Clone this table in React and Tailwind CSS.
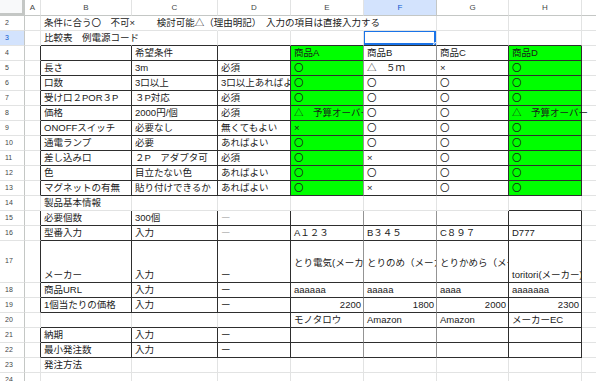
import React from "react";

const COLS = ["w-[25px]", "w-[16px]", "w-[91px]", "w-[86px]", "w-[73px]", "w-[73px]", "w-[73px]", "w-[72px]", "w-[73px]", "w-[100px]"];
const LETTERS = ["", "A", "B", "C", "D", "E", "F", "G", "H", ""];
const O = "〇";
const X = "×";

// columns from B (index 2) onward
const ROWS = {
  2: ["条件に合う〇　不可×　　 検討可能△（理由明記）　入力の項目は直接入力する"],
  3: ["比較表　例電源コード"],
  4: ["", "希望条件", "", "商品A", "商品B", "商品C", "商品D"],
  5: ["長さ", "3m", "必須", O, "△　５ｍ", X, O],
  6: ["口数", "3口以上", "3口以上あればよい", O, O, O, O],
  7: ["受け口２POR３P", "３P対応", "必須", O, O, O, O],
  8: ["価格", "2000円/個", "必須", "△　予算オーバー", O, O, "△　予算オーバー"],
  9: ["ONOFFスイッチ", "必要なし", "無くてもよい", X, O, O, O],
  10: ["通電ランプ", "必要", "あればよい", O, O, O, O],
  11: ["差し込み口", "２P　アダプタ可", "必須", O, X, O, O],
  12: ["色", "目立たない色", "あればよい", O, O, O, O],
  13: ["マグネットの有無", "貼り付けできるか", "あればよい", O, X, O, O],
  14: ["製品基本情報"],
  15: ["必要個数", "300個", "ー"],
  16: ["型番入力", "入力", "ー", "A１２３", "B３４５", "C８９７", "D777"],
  17: ["メーカー", "入力", "ー", "とり電気(メーカー)", "とりのめ（メーカー）", "とりかめら（メーカー）", "toritori(メーカー)"],
  18: ["商品URL", "入力", "ー", "aaaaaa", "aaaaa", "aaaa", "aaaaaaa"],
  19: ["1個当たりの価格", "入力", "ー", "2200", "1800", "2000", "2300"],
  20: ["", "", "", "モノタロウ", "Amazon", "Amazon", "メーカーEC"],
  21: ["納期", "入力", "ー"],
  22: ["最小発注数", "入力", "ー"],
  23: ["発注方法"],
  24: [],
};

const RB = {
  dark: "border-r-[#2e2e2e]",
  gray: "border-r-[#949494]",
  light: "border-r-[#e2e3e3]",
  none: "border-r-transparent",
  head: "border-r-[#c4c7c5]",
};
const BB = {
  dark: "border-b-[#2e2e2e]",
  light: "border-b-[#e2e3e3]",
  head: "border-b-[#c4c7c5]",
};

function rightKind(r, c) {
  if (c === 0) return "head";
  const boxed = (r >= 4 && r <= 13) || (r >= 15 && r <= 22);
  if (boxed) {
    if (c >= 1 && c <= 3) return r === 20 ? "light" : "dark";
    if (c === 4) return "dark";
    if (c === 5 || c === 6) return "gray";
    if (c === 7 || c === 8) return "dark";
  }
  if (r === 2 && c >= 2 && c <= 5) return "none";
  if (r === 3 && c === 2) return "none";
  return "light";
}

function bottomKind(r, c) {
  if (c === 0) return "head";
  if (c >= 2 && c <= 8) {
    if (r >= 3 && r <= 13) return "dark";
    if (r >= 15 && r <= 22) return "dark";
    if (r === 14 && c === 8) return "dark";
  }
  return "light";
}

function Cell({ r, c }) {
  const text = c >= 2 ? ROWS[r][c - 2] || "" : "";
  const green = r >= 4 && r <= 13 && (c === 5 || c === 8);
  const over = (r === 2 && c === 2) || (r === 3 && c === 2) || (r === 8 && c === 8);
  const right = r === 19 && c >= 5;
  const mid = r === 17 && c >= 5 && c <= 7;
  const faint = (r === 15 || r === 16) && c === 4;
  return (
    <div
      className={`relative flex shrink-0 border-r border-b px-[3px] pb-px ${COLS[c]} ${RB[rightKind(r, c)]} ${BB[bottomKind(r, c)]} ${
        green ? "bg-[#00ff00]" : ""
      } ${over ? "overflow-visible" : "overflow-hidden"} ${right ? "justify-end pr-[2px]" : ""} ${mid ? "items-center pt-[3px]" : "items-end"} ${
        faint ? "text-[#b5b5b5]" : "text-[#1a1a1a]"
      }`}
    >
      <span className="whitespace-nowrap leading-[12px]">{text}</span>
      {r === 3 && c === 6 && (
        <>
          <div className="absolute left-[-1px] top-[-1px] right-0 bottom-0 border-2 border-[#1a73e8]" />
          <div className="absolute right-[-3px] bottom-[-3px] w-[6px] h-[6px] rounded-full bg-[#1a73e8] border border-white" />
        </>
      )}
    </div>
  );
}

export default function App() {
  const rowNums = Object.keys(ROWS).map(Number);
  return (
    <div className="w-[596px] h-[381px] overflow-hidden bg-white font-['Liberation_Sans','Noto_Sans_CJK_JP',sans-serif] text-[9.5px]">
      <div className="flex h-[16px]">
        {LETTERS.map((l, c) => (
          <div
            key={c}
            className={`flex shrink-0 items-center justify-center text-[8px] ${COLS[c]} ${
              c === 0
                ? "bg-[#f8f9fa] border-r-[3px] border-b-[3px] border-[#c4c7c5]"
                : c === 6
                ? "bg-[#d3e3fd] text-[#0b57d0] border-r border-b border-r-[#c4c7c5] border-b-[#c4c7c5]"
                : "text-[#444746] border-r border-b border-r-[#e2e3e3] border-b-[#c4c7c5]"
            }`}
          >
            {l}
          </div>
        ))}
      </div>
      {rowNums.map((r) => (
        <div key={r} className={`flex ${r === 17 ? "h-[42px]" : "h-[15px]"}`}>
          <div
            className={`flex shrink-0 items-center pl-[5px] text-[7px] border-r border-b border-r-[#c4c7c5] border-b-[#e2e3e3] ${COLS[0]} ${
              r === 3 ? "bg-[#d3e3fd] text-[#0b57d0]" : "text-[#444746]"
            }`}
          >
            {r}
          </div>
          {COLS.slice(1).map((_, i) => (
            <Cell key={i} r={r} c={i + 1} />
          ))}
        </div>
      ))}
    </div>
  );
}
